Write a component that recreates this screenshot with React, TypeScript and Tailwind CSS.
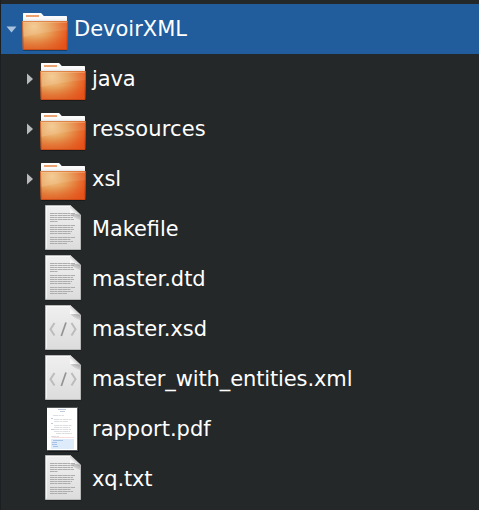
import React from "react";

type Kind = "folder" | "text" | "code" | "pdf";
type Entry = { name: string; kind: Kind; fit?: string };

const entries: Entry[] = [
  { name: "java", kind: "folder", fit: "tracking-[-0.1px]" },
  { name: "ressources", kind: "folder", fit: "tracking-[0.1px]" },
  { name: "xsl", kind: "folder" },
  { name: "Makefile", kind: "text", fit: "text-[20.8px]" },
  { name: "master.dtd", kind: "text" },
  { name: "master.xsd", kind: "code", fit: "tracking-[-0.05px]" },
  { name: "master_with_entities.xml", kind: "code", fit: "tracking-[-0.12px]" },
  { name: "rapport.pdf", kind: "pdf" },
  { name: "xq.txt", kind: "text", fit: "tracking-[-0.15px]" },
];

// Shared gradients for the folder and page icons
function Defs() {
  return (
    <svg width="0" height="0" className="absolute">
      <defs>
        <radialGradient id="front" gradientUnits="userSpaceOnUse" cx="0" cy="0" r="1" gradientTransform="translate(13 22) scale(38 34)">
          <stop offset="0" stopColor="#f3c98f" />
          <stop offset="0.4" stopColor="#e8a35c" />
          <stop offset="0.75" stopColor="#e66f30" />
          <stop offset="1" stopColor="#ec4a14" />
        </radialGradient>
        <linearGradient id="base" x1="0" y1="0" x2="0" y2="1">
          <stop offset="0.5" stopColor="#dc5a20" stopOpacity="0" />
          <stop offset="1" stopColor="#dc5a20" stopOpacity="0.6" />
        </linearGradient>
        <linearGradient id="gloss" x1="0" y1="0" x2="0" y2="1">
          <stop offset="0" stopColor="#fff" stopOpacity="0.04" />
          <stop offset="1" stopColor="#fff" stopOpacity="0.13" />
        </linearGradient>
        <linearGradient id="tab" x1="0" y1="0" x2="0" y2="1">
          <stop offset="0" stopColor="#fff" />
          <stop offset="0.6" stopColor="#f8f8f8" />
          <stop offset="1" stopColor="#d0d0d0" />
        </linearGradient>
        <linearGradient id="page" x1="0" y1="0" x2="0" y2="1">
          <stop offset="0" stopColor="#f0f0f0" />
          <stop offset="1" stopColor="#dcdcdc" />
        </linearGradient>
        <linearGradient id="fold" gradientUnits="userSpaceOnUse" x1="25" y1="11" x2="30" y2="6">
          <stop offset="0" stopColor="#ffffff" />
          <stop offset="0.5" stopColor="#f6f6f6" />
          <stop offset="1" stopColor="#c8c8c8" />
        </linearGradient>
        <linearGradient id="shade" gradientUnits="userSpaceOnUse" x1="29" y1="10" x2="26" y2="16">
          <stop offset="0" stopColor="#666" stopOpacity="0.45" />
          <stop offset="1" stopColor="#888" stopOpacity="0" />
        </linearGradient>
      </defs>
    </svg>
  );
}

function Folder() {
  return (
    <svg width="48" height="50" viewBox="0 0 48 50" className="block shrink-0">
      <path d="M2 46h44v1h-44z" fill="#000" opacity="0.3" />
      <path d="M2 19V9.5Q2 9 2.7 9H19.5Q20.5 9 21 10L22.8 12H45.3Q46 12 46 12.7V19Z" fill="url(#tab)" />
      <path d="M5 11h13v2H5z" fill="#eda36f" />
      <path d="M1 18Q1 17 2 17H46Q47 17 47 18L46.2 45Q46.2 46 45.2 46H2.8Q1.8 46 1.8 45Z" fill="url(#front)" />
      <path d="M1 18Q1 17 2 17H46Q47 17 47 18L46.2 45Q46.2 46 45.2 46H2.8Q1.8 46 1.8 45Z" fill="url(#base)" />
      <path d="M1.5 17.5H46.5L46.3 26Q25 27.5 2 33Z" fill="url(#gloss)" />
      <path d="M1.5 17.5H46.5" stroke="#d9743a" strokeWidth="1" opacity="0.7" />
      <path d="M2 18.5H46" stroke="#ffd0a5" strokeWidth="1" opacity="0.35" />
      <path d="M1.5 18L2.3 45.5H45.7L46.5 18" fill="none" stroke="#c03f0e" strokeWidth="1" opacity="0.65" />
    </svg>
  );
}

const lines: [number, number][] = [
  [10, 25], [12, 24], [14, 23], [16, 24], [18, 8],
  [22, 25], [24, 23], [26, 24], [28, 22], [30, 21],
  [34, 25], [36, 21], [38, 23], [40, 17],
];

function Page({ code }: { code?: boolean }) {
  return (
    <svg width="36" height="50" viewBox="0 1 36 50" className="block shrink-0">
      <path d="M0 47H36" stroke="#181b1d" strokeWidth="1" />
      <path d="M.5 2.5H25.5L35.5 12V46.5H.5Z" fill="url(#page)" stroke="#b8b8b8" />
      <path d="M1.5 45.5V3.5H25" fill="none" stroke="#fafafa" opacity="0.8" />
      <path d="M25 11H35V17Q30 16 25 11Z" fill="url(#shade)" />
      <path d="M25 2L36 12.3Q32 10.2 25 11.3Z" fill="url(#fold)" />
      {code ? (
        <g fill="none" strokeWidth="2">
          <path d="M9.5 20L5.5 26.2L9.5 32.5M26.5 20L30.5 26.2L26.5 32.5" stroke="#bcbcbc" />
          <path d="M21 19.5L16.3 33" stroke="#949494" strokeWidth="1.7" />
        </g>
      ) : (
        <g strokeWidth="1" stroke="#adadad">
          {lines.map(([y, w]) => (
            <path key={y} d={`M5 ${y + 0.5}h${w}`} strokeDasharray="4 .3 3 .4 5 .3" />
          ))}
        </g>
      )}
    </svg>
  );
}

// Thumbnail of the PDF's first page
function Pdf() {
  return (
    <svg width="32" height="50" viewBox="0 0 32 50" className="block shrink-0">
      <path d="M1 5H32V48H1Z" fill="#15181a" />
      <path d="M-.5 3.5H30.5V46.5H-.5Z" fill="#fff" stroke="#55585a" />
      <path d="M4 35H27V45H4Z" fill="#deebfb" />
      <g stroke="#a9bdd2" strokeWidth="1" opacity="0.75">
        <path d="M11 5.5h8M13 7.5h5M4 14.5h2M4 19.5h2M4 25.5h3" />
        <path d="M6 36.5h10M5 38.5h5M5 40.5h5M6 42.5h5" stroke="#92b3df" />
      </g>
      <g stroke="#c7c9cc" strokeWidth="1" opacity="0.6">
        <path d="M6 11.5h11M7 15.5h18M7 17.5h14M7 21.5h18M7 23.5h16M7 25.5h17M7 27.5h16M9 29.5h16M4 32.5h8" strokeDasharray="5 .5 3 .5" />
      </g>
      <path d="M5 33.5h22" stroke="#f0c6cd" strokeWidth="0.6" />
    </svg>
  );
}

function Icon({ kind }: { kind: Kind }) {
  if (kind === "folder") return <Folder />;
  if (kind === "pdf") return <Pdf />;
  return <Page code={kind === "code"} />;
}

export default function App() {
  return (
    <div className="h-[510px] w-[479px] overflow-hidden border-l border-[#1b1f22] bg-[#242829] pt-1 font-['DejaVu_Sans',sans-serif] text-[21px] leading-[50px] text-white">
      <Defs />
      <div className="flex h-[50px] bg-[#215d9c]">
        <svg width="20" height="50" viewBox="1 0 20 50" className="block shrink-0">
          <path d="M6.5 22.5H16.5L11.5 28.5Z" fill="#a9c3df" />
        </svg>
        <Folder />
        <span className="ml-[5px]">DevoirXML</span>
      </div>
      {entries.map(({ name, kind, fit = "" }) => (
        <div key={name} className="flex h-[50px]">
          <div className="w-[38px] shrink-0">
            {kind === "folder" && (
              <svg width="38" height="50" viewBox="1 0 38 50" className="block">
                <path d="M27 19.5L33 25L27 30.5Z" fill="#b8babb" />
              </svg>
            )}
          </div>
          <div className="flex w-[48px] shrink-0 justify-center">
            <Icon kind={kind} />
          </div>
          <span className={`ml-[5px] whitespace-nowrap ${fit}`}>{name}</span>
        </div>
      ))}
    </div>
  );
}
